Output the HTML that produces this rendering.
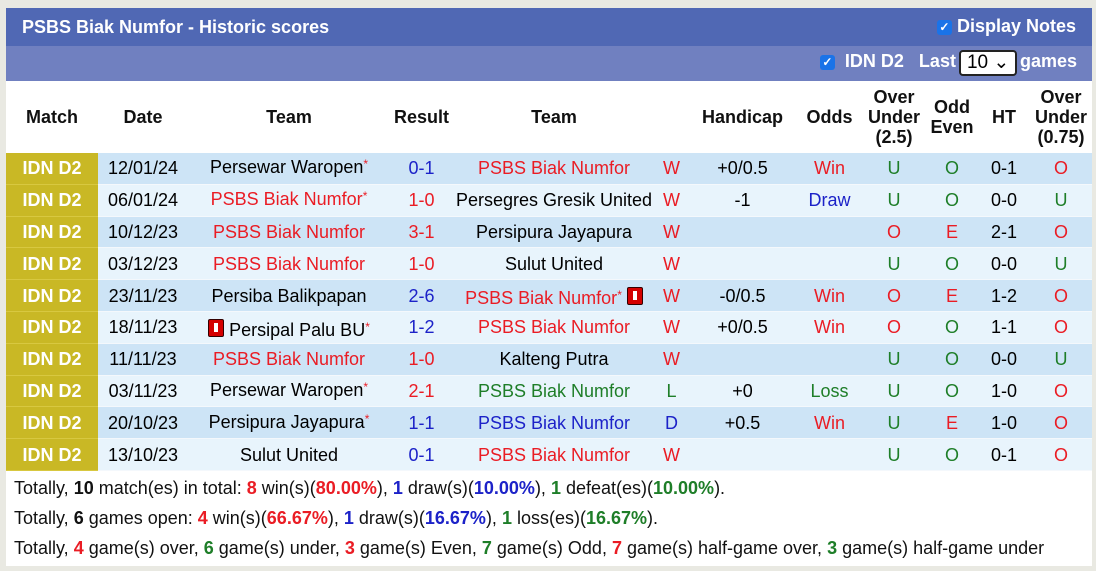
<!DOCTYPE html>
<html><head><meta charset="utf-8"><style>
body{margin:0;background:#e9e9e2;font-family:"Liberation Sans",Arial,sans-serif;}
.wrap{position:absolute;left:6px;top:8px;width:1086px;background:#fff;}
.t1{height:38px;background:#5068b4;color:#fff;font-weight:bold;font-size:18px;position:relative;}
.t1 .lt{position:absolute;left:16px;top:9px;}
.t1 .rt{position:absolute;right:16px;top:8px;}
.t2{height:35px;background:#7080c0;color:#fff;font-weight:bold;font-size:18px;position:relative;}
.cb{display:inline-block;width:15px;height:15px;background:#1a73e8;border-radius:3px;color:#fff;font-size:12px;line-height:15px;text-align:center;vertical-align:1px;}
.sel{display:inline-block;width:58px;height:26px;border:2px solid #222;border-radius:4px;background:#fff;color:#000;font-weight:normal;font-size:19px;line-height:22px;box-sizing:border-box;padding-left:6px;vertical-align:-1px;margin:0 3px 0 3px;}
table{border-collapse:collapse;table-layout:fixed;width:1086px;font-size:18px;}
th{height:72px;font-size:18px;font-weight:bold;color:#111;line-height:20px;padding:0;}
td{height:30.8px;line-height:20px;padding:0;text-align:center;white-space:nowrap;border-bottom:1px solid #f4f8fc;overflow:visible;}
td.m{background:#c9b825;color:#fff;font-weight:bold;font-size:18px;border-bottom:1px solid #d8c840;}
tr.a td{background:#cde4f6;} tr.b td{background:#e8f4fc;}
tr.a td.m,tr.b td.m{background:#c9b825;}
.r{color:#ea1c24}.bl{color:#1c22c8}.g{color:#1e7e28}
sup{font-size:12px;color:#ea1c24;vertical-align:0;position:relative;top:-5px;}
.card{display:inline-block;width:14px;height:16px;background:#d40000;border:1px solid #300;border-radius:2px;position:relative;vertical-align:-1px;}
.card:after{content:"";position:absolute;left:5px;top:3px;width:4px;height:9px;background:#fff;}
.dn{position:relative;top:3px;display:inline-block;}
.ft{font-size:18px;color:#111;padding-left:8px;}
.ft div{height:30px;line-height:30px;}
</style></head><body>
<div class="wrap">
<div class="t1"><span class="lt">PSBS Biak Numfor - Historic scores</span><span class="rt"><span class="cb">✓</span> Display Notes</span></div>
<div class="t2"><span style="position:absolute;right:15px;top:4px;"><span class="cb">✓</span>&nbsp; IDN D2 &nbsp; Last<span class="sel">10 ⌄</span>games</span></div>
<table>
<colgroup><col style="width:92px"><col style="width:90px"><col style="width:202px"><col style="width:63px"><col style="width:202px"><col style="width:33px"><col style="width:109px"><col style="width:65px"><col style="width:64px"><col style="width:52px"><col style="width:52px"><col style="width:62px"></colgroup>
<tr><th>Match</th><th>Date</th><th>Team</th><th>Result</th><th>Team</th><th></th><th>Handicap</th><th>Odds</th><th>Over<br>Under<br>(2.5)</th><th>Odd<br>Even</th><th>HT</th><th>Over<br>Under<br>(0.75)</th></tr>
<tr class="a"><td class="m">IDN D2</td><td>12/01/24</td><td>Persewar Waropen<sup>*</sup></td><td class="bl">0-1</td><td class="r">PSBS Biak Numfor</td><td class="r">W</td><td>+0/0.5</td><td class="r">Win</td><td class="g">U</td><td class="g">O</td><td>0-1</td><td class="r">O</td></tr>
<tr class="b"><td class="m">IDN D2</td><td>06/01/24</td><td class="r">PSBS Biak Numfor<sup>*</sup></td><td class="r">1-0</td><td>Persegres Gresik United</td><td class="r">W</td><td>-1</td><td class="bl">Draw</td><td class="g">U</td><td class="g">O</td><td>0-0</td><td class="g">U</td></tr>
<tr class="a"><td class="m">IDN D2</td><td>10/12/23</td><td class="r">PSBS Biak Numfor</td><td class="r">3-1</td><td>Persipura Jayapura</td><td class="r">W</td><td></td><td></td><td class="r">O</td><td class="r">E</td><td>2-1</td><td class="r">O</td></tr>
<tr class="b"><td class="m">IDN D2</td><td>03/12/23</td><td class="r">PSBS Biak Numfor</td><td class="r">1-0</td><td>Sulut United</td><td class="r">W</td><td></td><td></td><td class="g">U</td><td class="g">O</td><td>0-0</td><td class="g">U</td></tr>
<tr class="a"><td class="m">IDN D2</td><td>23/11/23</td><td>Persiba Balikpapan</td><td class="bl">2-6</td><td class="r"><span class="dn">PSBS Biak Numfor<sup>*</sup> <span class="card"></span></span></td><td class="r">W</td><td>-0/0.5</td><td class="r">Win</td><td class="r">O</td><td class="r">E</td><td>1-2</td><td class="r">O</td></tr>
<tr class="b"><td class="m">IDN D2</td><td>18/11/23</td><td><span class="dn"><span class="card"></span> Persipal Palu BU<sup>*</sup></span></td><td class="bl">1-2</td><td class="r">PSBS Biak Numfor</td><td class="r">W</td><td>+0/0.5</td><td class="r">Win</td><td class="r">O</td><td class="g">O</td><td>1-1</td><td class="r">O</td></tr>
<tr class="a"><td class="m">IDN D2</td><td>11/11/23</td><td class="r">PSBS Biak Numfor</td><td class="r">1-0</td><td>Kalteng Putra</td><td class="r">W</td><td></td><td></td><td class="g">U</td><td class="g">O</td><td>0-0</td><td class="g">U</td></tr>
<tr class="b"><td class="m">IDN D2</td><td>03/11/23</td><td>Persewar Waropen<sup>*</sup></td><td class="r">2-1</td><td class="g">PSBS Biak Numfor</td><td class="g">L</td><td>+0</td><td class="g">Loss</td><td class="g">U</td><td class="g">O</td><td>1-0</td><td class="r">O</td></tr>
<tr class="a"><td class="m">IDN D2</td><td>20/10/23</td><td>Persipura Jayapura<sup>*</sup></td><td class="bl">1-1</td><td class="bl">PSBS Biak Numfor</td><td class="bl">D</td><td>+0.5</td><td class="r">Win</td><td class="g">U</td><td class="r">E</td><td>1-0</td><td class="r">O</td></tr>
<tr class="b"><td class="m">IDN D2</td><td>13/10/23</td><td>Sulut United</td><td class="bl">0-1</td><td class="r">PSBS Biak Numfor</td><td class="r">W</td><td></td><td></td><td class="g">U</td><td class="g">O</td><td>0-1</td><td class="r">O</td></tr>
</table>
<div class="ft" style="padding-top:2px;padding-bottom:3px">
<div>Totally, <b>10</b> match(es) in total: <b class="r">8</b> win(s)(<b class="r">80.00%</b>), <b class="bl">1</b> draw(s)(<b class="bl">10.00%</b>), <b class="g">1</b> defeat(es)(<b class="g">10.00%</b>).</div>
<div>Totally, <b>6</b> games open: <b class="r">4</b> win(s)(<b class="r">66.67%</b>), <b class="bl">1</b> draw(s)(<b class="bl">16.67%</b>), <b class="g">1</b> loss(es)(<b class="g">16.67%</b>).</div>
<div>Totally, <b class="r">4</b> game(s) over, <b class="g">6</b> game(s) under, <b class="r">3</b> game(s) Even, <b class="g">7</b> game(s) Odd, <b class="r">7</b> game(s) half-game over, <b class="g">3</b> game(s) half-game under</div>
</div>
</div>
</body></html>
